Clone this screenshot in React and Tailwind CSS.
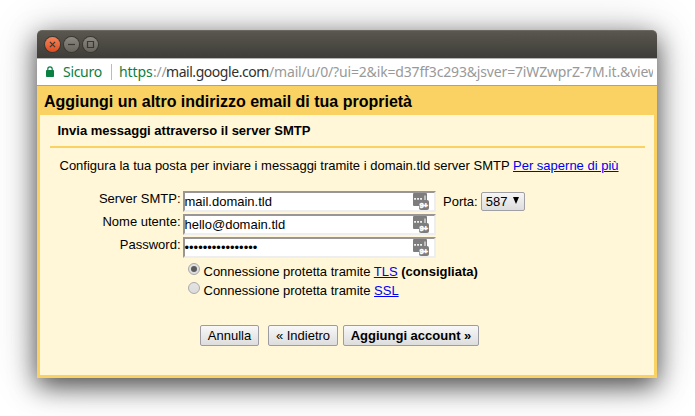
import React from "react";

const ARIAL = "font-['Liberation_Sans',Arial,sans-serif]";

function Field({ label, value, children }) {
  return (
    <div className="flex h-[23px] items-start">
      <label className="w-[141px] pr-[0.5px] text-right leading-[15px]">{label}</label>
      <div className="ml-0.5 flex h-[21px] w-[253px] items-center justify-between border-2 border-t-[#9a9696] border-r-[#eeeeee] border-b-[#eeeeee] border-l-[#9a9696] bg-white pr-1">
        <span className="-ml-[0.5px] leading-[17px] whitespace-pre">{value}</span>
        <ManagerIcon />
      </div>
      {children}
    </div>
  );
}

function ManagerIcon() {
  return (
    <svg width="18" height="17" viewBox="0 0 18 17" overflow="visible" className="shrink-0">
      <rect x="1" y="0" width="14" height="13" rx="1" fill="#7d7d7d" />
      <path d="M2.2 5h1.7v1.8H2.2zM5.2 5h1.7v1.8H5.2zM8.2 5h1.7v1.8H8.2zM12.5 2.5h1v4.5h-1z" fill="#fff" />
      <rect x="7" y="7" width="10" height="10" rx="2" fill="#7d7d7d" />
      <text x="7.4" y="14.8" fontSize="7.6" fontWeight="700" fill="#fff" fontFamily="Liberation Sans, sans-serif" stroke="#fff" strokeWidth="0.5">9+</text>
    </svg>
  );
}

function WindowButton({ close, children }) {
  return (
    <span className={`flex size-[15px] items-center justify-center rounded-full shadow-[0_0_0_1px_#393832] ${close ? "bg-linear-to-b from-[#f78257] to-[#dd4c1e]" : "bg-linear-to-b from-[#8b8980] to-[#66645d]"}`}>
      <svg width="9" height="9" viewBox="0 0 9 9" fill="none" stroke="#393832" strokeWidth="1.2">{children}</svg>
    </span>
  );
}

function Button({ width, bold, children }) {
  return (
    <button className={`h-[21px] rounded-[2px] border border-[#9c9ca2] bg-linear-to-b from-[#f8f8f8] to-[#dddddd] text-center leading-[19px] whitespace-nowrap ${width} ${bold ? "font-bold" : ""}`}>
      {children}
    </button>
  );
}

function Radio({ checked }) {
  return (
    <span className="flex size-3 items-center justify-center rounded-full border border-[#a9a9a9] bg-linear-to-b from-[#e4e4e4] to-[#dcdcdc]">
      {checked && <span className="size-1.5 rounded-full bg-[#5b5b5b]" />}
    </span>
  );
}

function Link({ children }) {
  return <a className="text-[#0000ee] underline">{children}</a>;
}

export default function App() {
  return (
    <div className={`h-[416px] w-[695px] overflow-hidden bg-white px-[37px] pt-[30px] text-[13px] text-black ${ARIAL}`}>
      <div className="flex h-[348px] w-[620px] flex-col rounded-t-[5px] shadow-[0_8px_26px_rgba(0,0,0,0.66),0_2px_50px_rgba(0,0,0,0.2)]">
        <div className="flex h-7 shrink-0 items-center gap-1 rounded-t-[5px] border-t border-[#6b695f] bg-linear-to-b from-[#59574e] to-[#3e3d38] pl-2">
          <WindowButton close><path d="M1.9 1.9l5.2 5.2M7.1 1.9L1.9 7.1" /></WindowButton>
          <WindowButton><path d="M1 4.5h7" /></WindowButton>
          <WindowButton><path d="M1.5 1.5h6v6h-6z" /></WindowButton>
        </div>
        <div className="flex h-7 shrink-0 items-center overflow-hidden border-t border-b border-t-[#b5b5b5] border-b-[#a3a3a3] bg-white pr-1 pb-px pl-[9px] font-['Noto_Sans',sans-serif] text-[14px]">
          <svg width="8" height="11" viewBox="0 0 8 11" className="shrink-0">
            <path d="M1.8 5V3a2.2 2.2 0 0 1 4.4 0v2" fill="none" stroke="#0b8043" strokeWidth="1.2" />
            <rect y="4" width="8" height="7" rx="0.8" fill="#0b8043" />
          </svg>
          <span className="ml-[9px] w-[48px] shrink-0 tracking-[-0.3px] text-[#0b8043]">Sicuro</span>
          <span className="h-4 w-px shrink-0 bg-[#bbbbbb]" />
          <div className="ml-[7px] flex min-w-0 flex-1 overflow-hidden whitespace-pre text-[#999999]">
            <span className="w-[34px] shrink-0 tracking-[-0.1px] text-[#0b8043]">https</span>
            <span className="w-[13px] shrink-0 tracking-[-0.2px]">://</span>
            <span className="w-[103px] shrink-0 tracking-[-0.45px] text-[#303030]">mail.google.com</span>
            <span className="shrink-0 tracking-[-0.16px]">/mail/u/0/?ui=2&amp;ik=d37ff3c293&amp;jsver=7iWZwprZ-7M.it.&amp;view</span>
          </div>
        </div>
        <main className="flex min-h-0 flex-1 flex-col bg-[#fad163] px-[3px] pb-[3px]">
          <h1 className="h-[29px] shrink-0 pl-1 text-[16px] leading-[31px] font-bold">Aggiungi un altro indirizzo email di tua proprietà</h1>
          <section className="flex-1 bg-[#fff7d7] pr-[9px] pl-[10px]">
            <h2 className="h-[33px] border-b-2 border-[#fad163] pl-[7.5px] leading-[31px] font-bold">Invia messaggi attraverso il server SMTP</h2>
            <p className="h-[43px] pt-[10px] pl-[9.5px] leading-[15px] whitespace-nowrap">
              Configura la tua posta per inviare i messaggi tramite i domain.tld server SMTP <Link>Per saperne di più</Link>
            </p>
            <div className="-ml-[10px]">
              <Field label="Server SMTP:" value="mail.domain.tld">
                <span className="ml-[7px] leading-[21px]">Porta:</span>
                <span className="mt-px ml-[3px] flex h-[19px] w-11 items-center justify-between self-start rounded-[2px] border border-[#a0a0a4] bg-linear-to-b from-[#f6f6f6] to-[#dddddd] pr-[5px] pl-1 leading-[17px]">
                  587
                  <svg width="6" height="7" viewBox="0 0 6 7" className="-mt-0.5"><path d="M0 0h6L3 7z" /></svg>
                </span>
              </Field>
              <Field label="Nome utente:" value="hello@domain.tld" />
              <Field label="Password:" value="••••••••••••••••" />
            </div>
            <div className="mt-[3px] pl-[138px] leading-[17px]">
              <div className="flex h-[19px] items-start gap-[3.5px]">
                <Radio checked />
                <span>Connessione protetta tramite <Link>TLS</Link> <b>(consigliata)</b></span>
              </div>
              <div className="flex h-[19px] items-start gap-[3.5px]">
                <Radio />
                <span>Connessione protetta tramite <Link>SSL</Link></span>
              </div>
            </div>
            <div className="mt-[24px] flex pl-[150px]">
              <Button width="w-[59px]">Annulla</Button>
              <span className="w-[9px]" />
              <Button width="w-[70px]">« Indietro</Button>
              <span className="w-[5px]" />
              <Button width="w-[136px]" bold>Aggiungi account »</Button>
            </div>
          </section>
        </main>
      </div>
    </div>
  );
}
